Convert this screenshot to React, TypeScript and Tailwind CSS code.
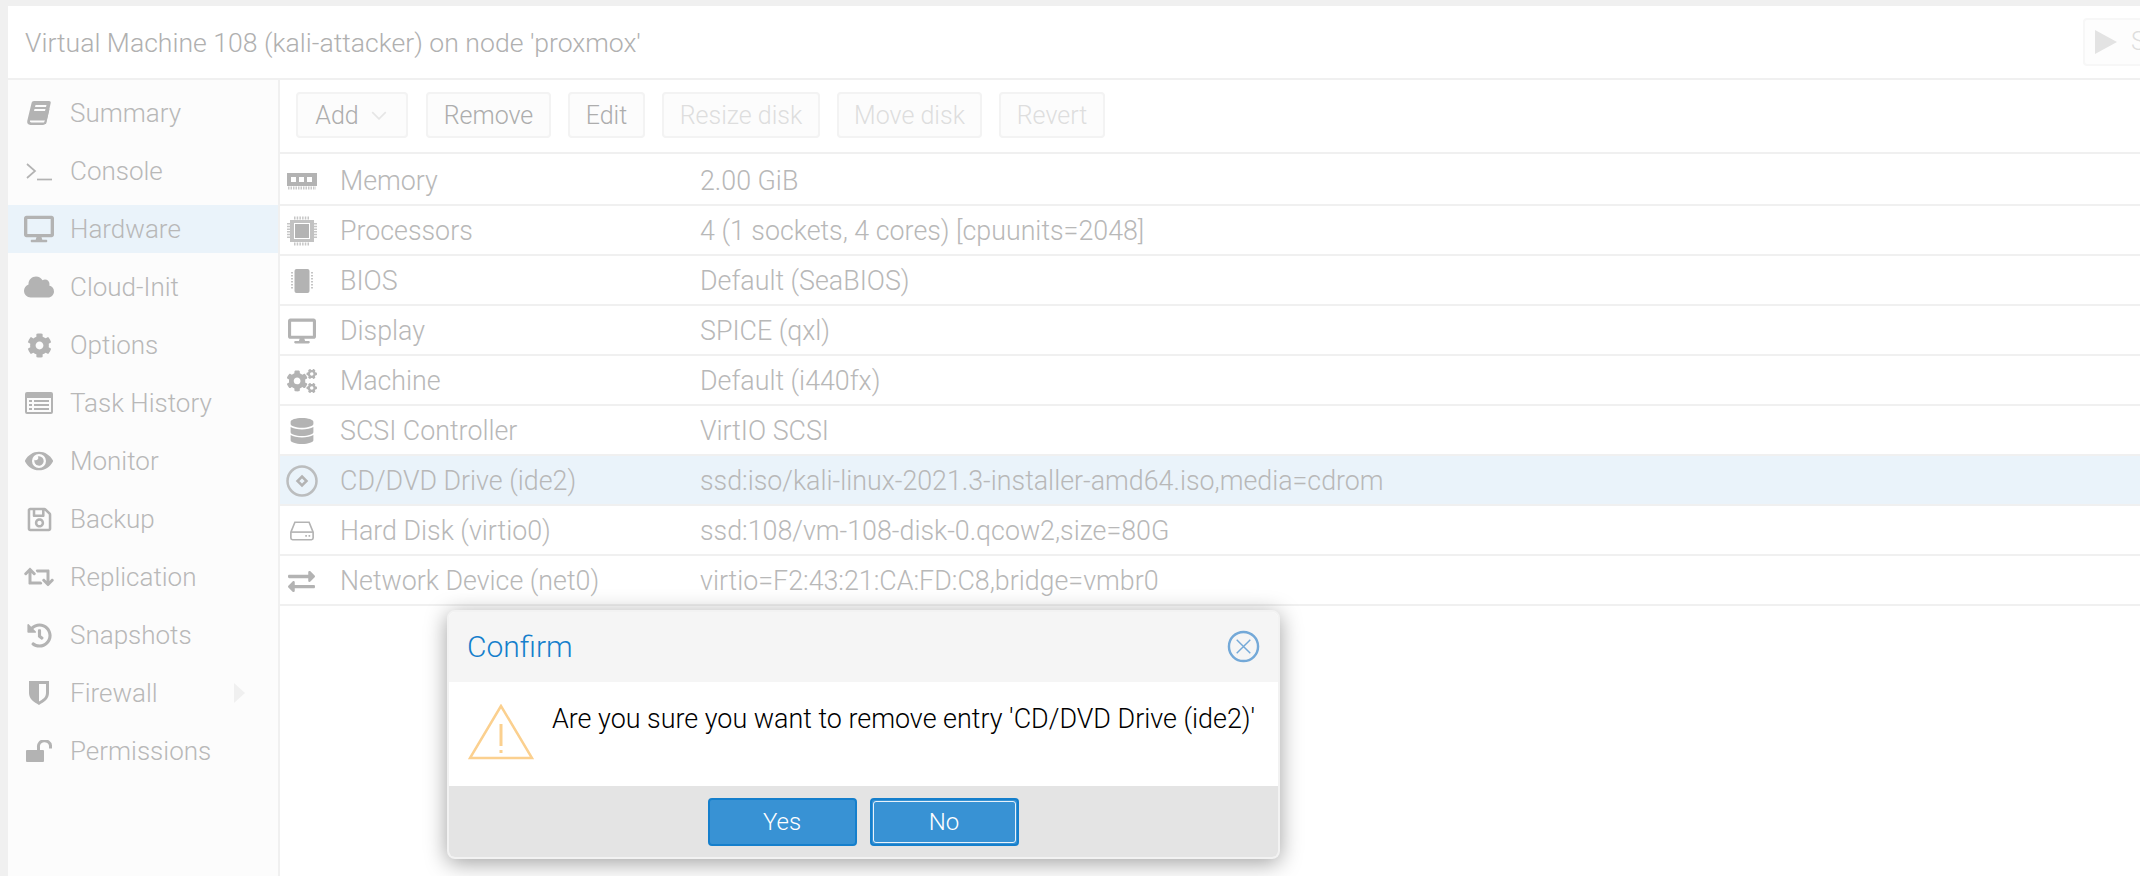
import type { ReactNode } from 'react';
import {
  FaCloud,
  FaCog,
  FaCogs,
  FaDatabase,
  FaDesktop,
  FaExchangeAlt,
  FaEye,
  FaHistory,
  FaRegSave,
  FaRetweet,
} from 'react-icons/fa';

const FONT = 'font-["Roboto","Liberation_Sans",sans-serif] font-light';

function BookIcon() {
  return (
    <svg viewBox="0 0 26 26" className="h-[26px] w-[26px]" fill="#b3b3b3">
      <path d="M8 1h15c1.200 0 2 .9 1.700 2.100L20.600 21.500c-.5 2-1.800 3.500-4 3.500H4.500C2 25 .7 23 1.300 20.800L5.500 3.200C5.900 1.800 6.700 1 8 1zM9.500 5l-.5 2h11l.5-2zm-1 4l-.5 2h11l.5-2zM4 20.500c-.3 1.300.3 2 1.500 2h11.500c1 0 1.600-.5 1.900-1.500l.1-.5z" fillRule="evenodd" />
      <path d="M23.500 9l-3.500 15h-2l3.500-14z" />
    </svg>
  );
}

function ConsoleIcon() {
  return (
    <svg viewBox="0 0 26 20" className="h-[20px] w-[26px]" fill="none" stroke="#b3b3b3" strokeWidth="1.700">
      <path d="M1 3l8 7-8 7" />
      <path d="M11 18.500h15" />
    </svg>
  );
}

function ListIcon() {
  return (
    <svg viewBox="0 0 28 22" className="h-[22px] w-[28px]" fill="#b3b3b3">
      <path fillRule="evenodd" d="M2 0h24a2 2 0 0 1 2 2v18a2 2 0 0 1-2 2H2a2 2 0 0 1-2-2V2a2 2 0 0 1 2-2zM2 6v14h24V6z" />
      <path d="M4 8h3v2H4zM9 8h15v2H9zM4 12h3v2H4zM9 12h15v2H9zM4 16h3v2H4zM9 16h15v2H9z" />
    </svg>
  );
}

function ShieldIcon() {
  return (
    <svg viewBox="0 0 20 24" className="h-[24px] w-[20px]" fill="#b3b3b3">
      <path fillRule="evenodd" d="M0 0h20v12c0 6-5 9-10 12C5 21 0 18 0 12zM10 3v17.500c3.500-2 7-4 7-8.500V3z" />
    </svg>
  );
}

function UnlockIcon() {
  return (
    <svg viewBox="0 0 27 22" className="h-[22px] w-[27px]">
      <rect x="0" y="10" width="18" height="12" rx="1" fill="#b3b3b3" />
      <path d="M9.500 11V7a6 5.500 0 0 1 12 -1.500 M21.500 5v3.500" fill="none" stroke="#b3b3b3" strokeWidth="3" transform="translate(3 0)" />
    </svg>
  );
}

function MemoryIcon() {
  return (
    <svg viewBox="0 0 30 17" className="h-[17px] w-[30px]" fill="#b3b3b3">
      <path fillRule="evenodd" d="M0 0h30v13H0zM4 4v5h5V4zm8 0v5h5V4zm8 0v5h5V4z" />
      <path d="M1 15h28" stroke="#b3b3b3" strokeWidth="3" strokeDasharray="1.500 1" opacity=".7" />
    </svg>
  );
}

function ChipIcon() {
  return (
    <svg viewBox="0 0 30 30" className="h-[30px] w-[30px]" fill="#b3b3b3">
      <path fillRule="evenodd" d="M3 4h24v22H3zM7 7v16h16V7z" opacity=".8" />
      <path d="M8 8h14v14H8z" />
      <g stroke="#b3b3b3" strokeWidth="3" strokeDasharray="1.500 1.200" opacity=".75" fill="none">
        <path d="M7 2h16M7 28h16M1.500 7v16M28.500 7v16" />
      </g>
    </svg>
  );
}

function BiosIcon() {
  return (
    <svg viewBox="0 0 22 24" className="h-[24px] w-[22px]" fill="#b3b3b3">
      <rect x="3.500" y="0" width="15" height="24" rx="2" />
      <path d="M1 3v18M21 3v18" stroke="#b3b3b3" strokeWidth="1.500" strokeDasharray="1.500 1.500" fill="none" />
    </svg>
  );
}

function DiscIcon() {
  return (
    <svg viewBox="0 0 32 32" className="h-[32px] w-[32px]" fill="none" stroke="#b3b3b3">
      <circle cx="16" cy="16" r="14.500" strokeWidth="2.500" opacity=".85" />
      <path d="M16 11.500l4.500 4.500-4.500 4.500-4.500-4.500z" strokeWidth="2.500" />
    </svg>
  );
}

function HddIcon() {
  return (
    <svg viewBox="0 0 22 18" className="h-[20px] w-[24px]" fill="none" stroke="#b3b3b3" strokeWidth="1.500">
      <path d="M4.500 1h13l3.700 9v5.500a1.500 1.500 0 0 1-1.500 1.500H2.300a1.500 1.500 0 0 1-1.500-1.500V10z" />
      <path d="M1 10h20" />
      <path d="M14 13.500h1.500M17 13.500h1.500" strokeWidth="1.500" />
    </svg>
  );
}

const navItems: { label: string; icon: ReactNode; selected?: boolean; arrow?: boolean }[] = [
  { label: 'Summary', icon: <BookIcon /> },
  { label: 'Console', icon: <ConsoleIcon /> },
  { label: 'Hardware', icon: <FaDesktop size={30} />, selected: true },
  { label: 'Cloud-Init', icon: <FaCloud size={30} /> },
  { label: 'Options', icon: <FaCog size={25} /> },
  { label: 'Task History', icon: <ListIcon /> },
  { label: 'Monitor', icon: <FaEye size={28} /> },
  { label: 'Backup', icon: <FaRegSave size={27} /> },
  { label: 'Replication', icon: <FaRetweet size={30} /> },
  { label: 'Snapshots', icon: <FaHistory size={25} /> },
  { label: 'Firewall', icon: <ShieldIcon />, arrow: true },
  { label: 'Permissions', icon: <UnlockIcon /> },
];

const hwRows: { label: string; value: string; icon: ReactNode; selected?: boolean }[] = [
  { label: 'Memory', value: '2.00 GiB', icon: <MemoryIcon /> },
  { label: 'Processors', value: '4 (1 sockets, 4 cores) [cpuunits=2048]', icon: <ChipIcon /> },
  { label: 'BIOS', value: 'Default (SeaBIOS)', icon: <BiosIcon /> },
  { label: 'Display', value: 'SPICE (qxl)', icon: <FaDesktop size={28} /> },
  { label: 'Machine', value: 'Default (i440fx)', icon: <FaCogs size={30} /> },
  { label: 'SCSI Controller', value: 'VirtIO SCSI', icon: <FaDatabase size={26} /> },
  {
    label: 'CD/DVD Drive (ide2)',
    value: 'ssd:iso/kali-linux-2021.3-installer-amd64.iso,media=cdrom',
    icon: <DiscIcon />,
    selected: true,
  },
  { label: 'Hard Disk (virtio0)', value: 'ssd:108/vm-108-disk-0.qcow2,size=80G', icon: <HddIcon /> },
  { label: 'Network Device (net0)', value: 'virtio=F2:43:21:CA:FD:C8,bridge=vmbr0', icon: <FaExchangeAlt size={27} /> },
];

function ToolButton({ children, disabled, className }: { children: ReactNode; disabled?: boolean; className: string }) {
  return (
    <div
      className={`flex h-[46px] items-center justify-center rounded-[4px] border-2 border-[#f3f3f3] bg-[#fcfcfc] pt-[1px] text-[25px] ${
        disabled ? 'text-[#dedede]' : 'text-[#adadad]'
      } ${className}`}
    >
      {children}
    </div>
  );
}

function ConfirmDialog() {
  return (
    <div className="absolute left-[447px] top-[610px] flex h-[249px] w-[833px] flex-col overflow-hidden rounded-[8px] border-2 border-[#f2f2f2] bg-white shadow-[0_4px_22px_rgba(0,0,0,0.38)]">
      <div className="flex h-[70px] items-center justify-between bg-[#f5f5f5] pb-[2px] pl-[18px] pr-[18px]">
        <span className="text-[30px] text-[#157fcc]">Confirm</span>
        <svg viewBox="0 0 34 34" className="h-[33px] w-[33px]" fill="none" stroke="#74a9d8" strokeWidth="2.500">
          <circle cx="17" cy="17" r="15" />
          <path d="M10 10l14 14M24 10L10 24" strokeWidth="1.500" />
        </svg>
      </div>
      <div className="flex h-[104px] items-start bg-white pl-[19px] pt-[19px]">
        <svg viewBox="0 0 66 56" className="mt-[3px] h-[56px] w-[66px]" fill="none" stroke="#fbd08f" strokeWidth="2.500">
          <path d="M33 2L2 54h62z" />
          <path d="M33 20v22M33 46v3" strokeWidth="3" />
        </svg>
        <span className="ml-[18px] mt-[1px] whitespace-nowrap text-[26.900px] leading-[34px] text-black">
          Are you sure you want to remove entry 'CD/DVD Drive (ide2)'
        </span>
      </div>
      <div className="flex flex-1 items-start justify-center gap-[13px] bg-[#e4e4e4] pr-[1px] pt-[12px]">
        <div className="flex h-[48px] w-[149px] items-center justify-center rounded-[4px] border-2 border-[#157fcc] bg-[#3892d4] text-[24px] text-white">
          Yes
        </div>
        <div className="h-[48px] w-[149px] rounded-[4px] border-2 border-[#157fcc] bg-[#3892d4] p-[1px]">
          <div className="flex h-full items-center justify-center rounded-[3px] border border-[#e8f2fa] text-[24px] text-white">
            No
          </div>
        </div>
      </div>
    </div>
  );
}

export default function App() {
  return (
    <div className={`relative h-[876px] w-[2140px] overflow-hidden bg-[#f0f0f0] pl-[8px] pt-[6px] ${FONT}`}>
      <header className="flex h-[74px] items-center justify-between border-b-2 border-[#f0f0f0] bg-white pl-[17px]">
        <span className="pt-[1px] text-[26.600px] text-[#b0b0b0]">Virtual Machine 108 (kali-attacker) on node 'proxmox'</span>
        <div className="flex h-[48px] w-[57px] items-center gap-[14px] rounded-l-[4px] border-2 border-r-0 border-[#f7f7f7] bg-[#fdfdfd] pl-[10px]">
          <svg viewBox="0 0 22 24" className="h-[24px] w-[22px] shrink-0" fill="#e3e3e3">
            <path d="M0 0l22 12L0 24z" />
          </svg>
          <span className="text-[25px] text-[#dedede]">S</span>
        </div>
      </header>

      <div className="flex h-[796px]">
        <nav className="flex w-[272px] flex-col gap-[10px] border-r-2 border-[#f0f0f0] bg-[#fcfcfc] pt-[9px]">
          {navItems.map((item) => (
            <div
              key={item.label}
              className={`flex h-[48px] items-center ${item.selected ? 'bg-[#eaf3fa]' : ''}`}
            >
              <span className="flex w-[62px] shrink-0 justify-center text-[#b3b3b3]">{item.icon}</span>
              <span className="text-[26px] text-[#b8b8b8]">{item.label}</span>
              {item.arrow ? (
                <svg viewBox="0 0 11 20" className="ml-[76px] h-[20px] w-[11px]" fill="#f0f0f0">
                  <path d="M0 0l11 10L0 20z" />
                </svg>
              ) : null}
            </div>
          ))}
        </nav>

        <main className="flex-1 bg-white">
          <div className="mb-[1.500px] flex h-[74px] items-center gap-[17px] border-b-2 border-[#f0f0f0] pb-[2px] pl-[16px]">
            <ToolButton className="mr-[1px] w-[112px] gap-[12px] pr-[2px]">
              Add
              <svg viewBox="0 0 14 8" className="h-[9px] w-[16px]" fill="none" stroke="#e6e6e6" strokeWidth="1.500">
                <path d="M1 1l6 6 6-6" />
              </svg>
            </ToolButton>
            <ToolButton className="w-[125px]">Remove</ToolButton>
            <ToolButton className="w-[77px]">Edit</ToolButton>
            <ToolButton disabled className="w-[158px]">Resize disk</ToolButton>
            <ToolButton disabled className="w-[145px]">Move disk</ToolButton>
            <ToolButton disabled className="w-[106px]">Revert</ToolButton>
          </div>
          {hwRows.map((row) => (
            <div
              key={row.label}
              className={`flex h-[50px] items-center border-b-2 border-[#f0f0f0] pt-[3px] ${row.selected ? 'bg-[#eaf3fa]' : ''}`}
            >
              <span className="ml-[1px] flex w-[41px] shrink-0 justify-center text-[#b3b3b3]">{row.icon}</span>
              <span className="ml-[18px] w-[360px] shrink-0 text-[26.800px] text-[#b8b8b8]">{row.label}</span>
              <span className="text-[26.800px] text-[#b8b8b8]">{row.value}</span>
            </div>
          ))}
        </main>
      </div>

      <ConfirmDialog />
    </div>
  );
}
